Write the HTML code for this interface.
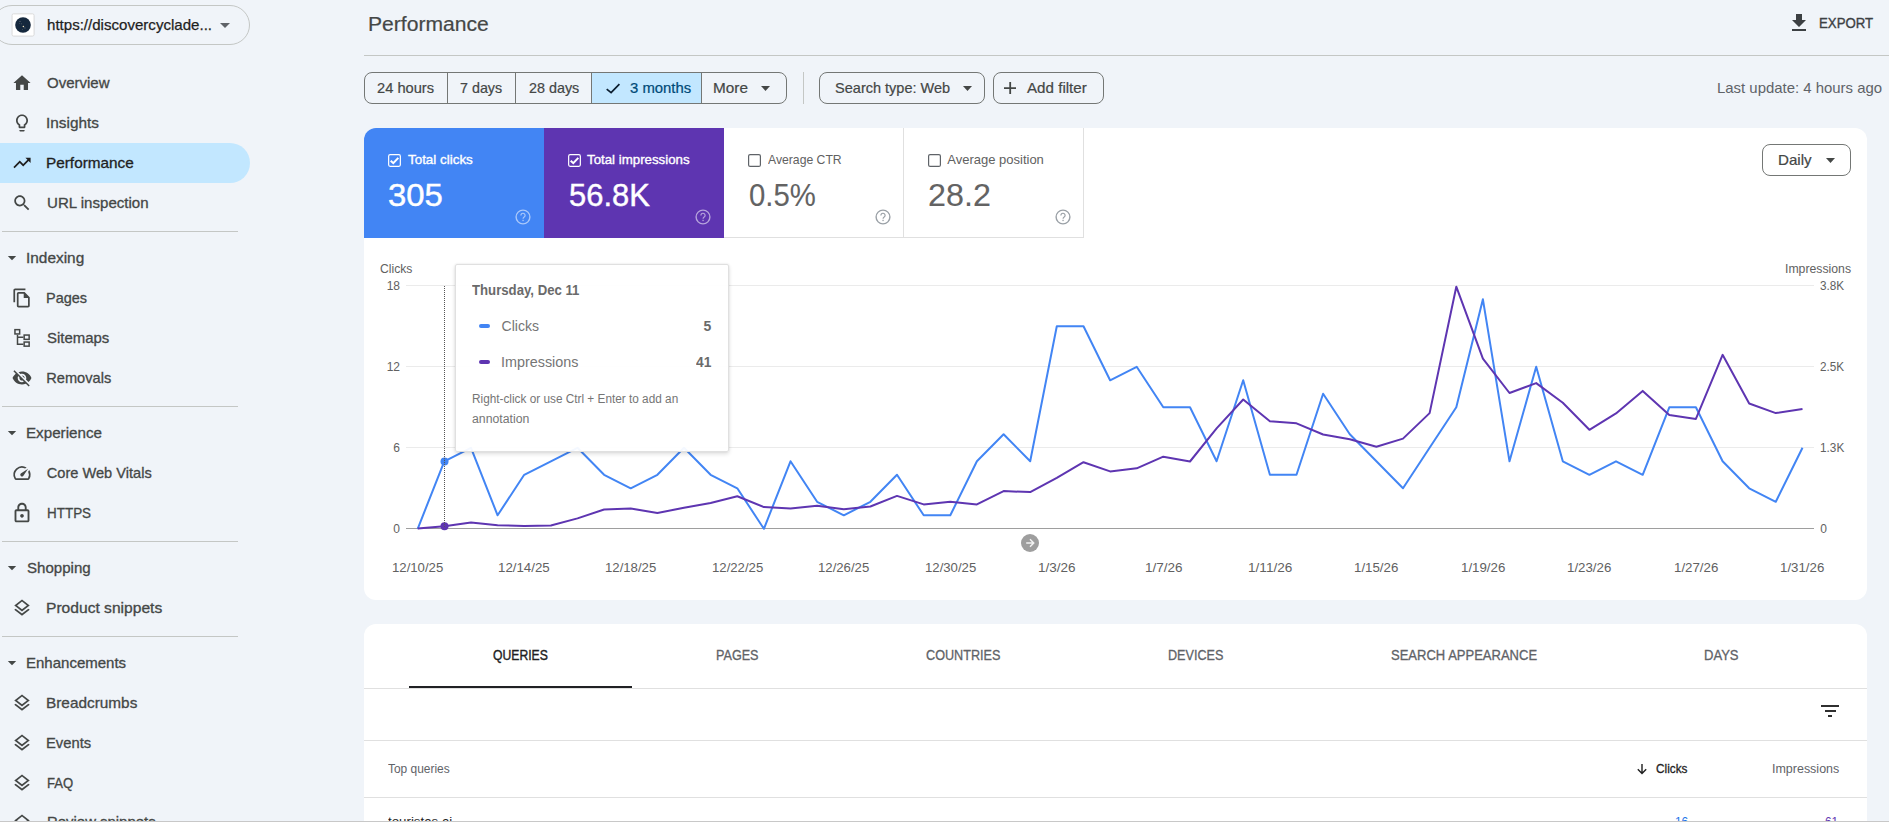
<!DOCTYPE html>
<html lang="en"><head><meta charset="utf-8"><title>Performance</title>
<style>
html,body{margin:0;padding:0}
body{width:1889px;height:822px;overflow:hidden;position:relative;background:#f0f4f9;font-family:"Liberation Sans",sans-serif}
.b{position:absolute;display:block}
.t{position:absolute;white-space:pre;display:block;transform-origin:0 0}
</style></head><body>
<div class="b" style="left:-8px;top:5px;width:258px;height:39.5px;border:1px solid #c4c7c5;border-radius:21px;box-sizing:border-box;"></div>
<svg class="b" style="left:11px;top:13px" width="24" height="24" viewBox="0 0 24 24"><rect x="1.050" y=".85" width="22" height="22.200" rx="1.500" fill="#fff" stroke="#d6d6d6" stroke-width=".9"/><circle cx="12" cy="12" r="7.800" fill="#15283d"/><circle cx="12.400" cy="13.600" r=".75" fill="#f5e6c0"/><g fill="#5b6470"><circle cx="9" cy="8.400" r=".6"/><circle cx="10.300" cy="10.800" r=".5"/><circle cx="13.900" cy="14.900" r=".6"/><circle cx="11.500" cy="16.500" r=".45"/><circle cx="8.600" cy="10.500" r=".4"/></g></svg>
<span class="t " style="left:46.76px;top:17.17px;font-size:15px;line-height:15px;color:#1f1f1f;transform:scaleX(1.0047);-webkit-text-stroke:0.25px #1f1f1f;">https://discovercyclade...</span>
<svg class="b" style="left:219px;top:22px" width="12" height="7" viewBox="0 0 12 7"><path d="M1 1h10L6 6z" fill="#5f6368"/></svg>
<svg class="b" style="left:10px;top:71px" width="24" height="24" viewBox="0 0 24 24" fill="#444746" color="#444746"><path transform="translate(1.68 1.68) scale(.86)" d="M10 20v-6h4v6h5v-8h3L12 3 2 12h3v8z"/></svg>
<span class="t " style="left:46.68px;top:75.77px;font-size:14.6px;line-height:14.6px;color:#444746;transform:scaleX(1.0285);-webkit-text-stroke:0.3px #444746;">Overview</span>
<svg class="b" style="left:10px;top:111px" width="24" height="24" viewBox="0 0 24 24" fill="#444746" color="#444746"><path transform="translate(1.68 1.68) scale(.86)" d="M9 21c0 .55.45 1 1 1h4c.55 0 1-.45 1-1v-1H9v1zm3-19C8.14 2 5 5.14 5 9c0 2.38 1.19 4.47 3 5.74V17c0 .55.45 1 1 1h6c.55 0 1-.45 1-1v-2.26c1.81-1.27 3-3.36 3-5.74 0-3.86-3.14-7-7-7zm2.85 11.1l-.85.6V16h-4v-2.3l-.85-.6C7.8 12.16 7 10.63 7 9c0-2.76 2.24-5 5-5s5 2.24 5 5c0 1.63-.8 3.16-2.15 4.1z"/></svg>
<span class="t " style="left:45.75px;top:115.77px;font-size:14.6px;line-height:14.6px;color:#444746;transform:scaleX(1.0516);-webkit-text-stroke:0.3px #444746;">Insights</span>
<div class="b" style="left:0px;top:143px;width:250px;height:40px;background:#c2e7ff;border-radius:0 20px 20px 0;"></div>
<svg class="b" style="left:10px;top:151px" width="24" height="24" viewBox="0 0 24 24" fill="#1f1f1f" color="#1f1f1f"><path transform="translate(1.68 1.68) scale(.86)" d="M16 6l2.29 2.29-4.88 4.88-4-4L2 16.59 3.41 18l6-6 4 4 6.3-6.29L22 12V6z"/></svg>
<span class="t " style="left:45.70px;top:155.77px;font-size:14.6px;line-height:14.6px;color:#1f1f1f;transform:scaleX(1.0510);-webkit-text-stroke:0.3px #1f1f1f;">Performance</span>
<svg class="b" style="left:10px;top:191px" width="24" height="24" viewBox="0 0 24 24" fill="#444746" color="#444746"><path transform="translate(1.68 1.68) scale(.86)" d="M15.5 14h-.79l-.28-.27C15.41 12.59 16 11.11 16 9.5 16 5.91 13.09 3 9.5 3S3 5.91 3 9.5 5.91 16 9.5 16c1.61 0 3.09-.59 4.23-1.57l.27.28v.79l5 4.99L20.49 19l-4.99-5zm-6 0C7.01 14 5 11.99 5 9.5S7.01 5 9.5 5 14 7.01 14 9.5 11.99 14 9.5 14z"/></svg>
<span class="t " style="left:46.50px;top:195.77px;font-size:14.6px;line-height:14.6px;color:#444746;transform:scaleX(1.0323);-webkit-text-stroke:0.3px #444746;">URL inspection</span>
<div class="b" style="left:2px;top:231.0px;width:236px;height:1px;background:#c4c7c5;"></div>
<svg class="b" style="left:7px;top:255px" width="10" height="6" viewBox="0 0 10 6"><path d="M.8 1h8.400L5 5.200z" fill="#444746"/></svg>
<span class="t " style="left:25.55px;top:250.67px;font-size:14.6px;line-height:14.6px;color:#444746;transform:scaleX(1.0557);-webkit-text-stroke:0.3px #444746;">Indexing</span>
<svg class="b" style="left:10px;top:286px" width="24" height="24" viewBox="0 0 24 24" fill="#444746" color="#444746"><path transform="translate(1.68 1.68) scale(.86)" d="M16 1H4c-1.1 0-2 .9-2 2v14h2V3h12V1zm-1 4H8c-1.1 0-1.99.9-1.99 2L6 21c0 1.1.89 2 1.99 2H19c1.1 0 2-.9 2-2V11l-6-6zM8 21V7h6v5h5v9H8z"/></svg>
<span class="t " style="left:45.80px;top:290.77px;font-size:14.6px;line-height:14.6px;color:#444746;transform:scaleX(0.9926);-webkit-text-stroke:0.3px #444746;">Pages</span>
<svg class="b" style="left:10px;top:326px" width="24" height="24" viewBox="0 0 24 24" fill="#444746" color="#444746"><g fill="none" stroke="currentColor" stroke-width="1.5"><rect x="4.95" y="3.65" width="4.7" height="4.3"/><rect x="14.15" y="9.05" width="5" height="4.3"/><rect x="14.15" y="16.05" width="5" height="4.1"/><path d="M7.500 8.700V18.200H13.400M7.500 11.200H13.400"/></g></svg>
<span class="t " style="left:46.70px;top:330.77px;font-size:14.6px;line-height:14.6px;color:#444746;transform:scaleX(1.0248);-webkit-text-stroke:0.3px #444746;">Sitemaps</span>
<svg class="b" style="left:10px;top:366px" width="24" height="24" viewBox="0 0 24 24" fill="#444746" color="#444746"><path transform="translate(1.68 1.68) scale(.86)" d="M12 7c2.76 0 5 2.24 5 5 0 .65-.13 1.26-.36 1.83l2.92 2.92c1.51-1.26 2.7-2.89 3.43-4.75-1.73-4.39-6-7.5-11-7.5-1.4 0-2.74.25-3.98.7l2.16 2.16C10.74 7.13 11.35 7 12 7zM2 4.27l2.28 2.28.46.46C3.08 8.3 1.78 10.02 1 12c1.73 4.39 6 7.5 11 7.5 1.55 0 3.03-.3 4.38-.84l.42.42L19.73 22 21 20.73 3.27 3 2 4.27zM7.53 9.8l1.55 1.55c-.05.21-.08.43-.08.65 0 1.66 1.34 3 3 3 .22 0 .44-.03.65-.08l1.55 1.55c-.67.33-1.41.53-2.2.53-2.76 0-5-2.24-5-5 0-.79.2-1.53.53-2.2zm4.31-.78l3.15 3.15.02-.16c0-1.66-1.34-3-3-3l-.17.01z"/></svg>
<span class="t " style="left:46.32px;top:370.77px;font-size:14.6px;line-height:14.6px;color:#444746;-webkit-text-stroke:0.3px #444746;">Removals</span>
<div class="b" style="left:2px;top:406.0px;width:236px;height:1px;background:#c4c7c5;"></div>
<svg class="b" style="left:7px;top:430px" width="10" height="6" viewBox="0 0 10 6"><path d="M.8 1h8.400L5 5.200z" fill="#444746"/></svg>
<span class="t " style="left:25.80px;top:425.67px;font-size:14.6px;line-height:14.6px;color:#444746;transform:scaleX(1.0396);-webkit-text-stroke:0.3px #444746;">Experience</span>
<svg class="b" style="left:10px;top:461px" width="24" height="24" viewBox="0 0 24 24" fill="#444746" color="#444746"><path transform="translate(1.68 1.68) scale(.86)" d="M20.38 8.57l-1.23 1.85a8 8 0 0 1-.22 7.58H5.07A8 8 0 0 1 15.58 6.85l1.85-1.23A10 10 0 0 0 3.35 19a2 2 0 0 0 1.72 1h13.85a2 2 0 0 0 1.74-1 10 10 0 0 0-.27-10.44zm-9.79 6.84a2 2 0 0 0 2.83 0l5.66-8.49-8.49 5.66a2 2 0 0 0 0 2.83z"/></svg>
<span class="t " style="left:46.81px;top:465.77px;font-size:14.6px;line-height:14.6px;color:#444746;-webkit-text-stroke:0.3px #444746;">Core Web Vitals</span>
<svg class="b" style="left:10px;top:501px" width="24" height="24" viewBox="0 0 24 24" fill="#444746" color="#444746"><path transform="translate(0.84 0.84) scale(.93)" d="M18 8h-1V6c0-2.76-2.24-5-5-5S7 3.240 7 6v2H6c-1.100 0-2 .9-2 2v10c0 1.100.9 2 2 2h12c1.100 0 2-.9 2-2V10c0-1.100-.9-2-2-2zM9 6c0-1.660 1.340-3 3-3s3 1.340 3 3v2H9V6zm9 14H6V10h12v10zm-6-3c1.100 0 2-.9 2-2s-.9-2-2-2-2 .9-2 2 .9 2 2 2z"/></svg>
<span class="t " style="left:46.81px;top:505.77px;font-size:14.6px;line-height:14.6px;color:#444746;transform:scaleX(0.9211);-webkit-text-stroke:0.3px #444746;">HTTPS</span>
<div class="b" style="left:2px;top:541.0px;width:236px;height:1px;background:#c4c7c5;"></div>
<svg class="b" style="left:7px;top:565px" width="10" height="6" viewBox="0 0 10 6"><path d="M.8 1h8.400L5 5.200z" fill="#444746"/></svg>
<span class="t " style="left:26.51px;top:560.67px;font-size:14.6px;line-height:14.6px;color:#444746;transform:scaleX(1.0330);-webkit-text-stroke:0.3px #444746;">Shopping</span>
<svg class="b" style="left:10px;top:596px" width="24" height="24" viewBox="0 0 24 24" fill="#444746" color="#444746"><path transform="translate(1.68 1.68) scale(.86)" d="M11.99 18.54l-7.37-5.73L3 14.07l9 7 9-7-1.630-1.270-7.380 5.740zM12 16l7.360-5.730L21 9l-9-7-9 7 1.630 1.270L12 16zm0-11.470L17.740 9 12 13.470 6.260 9 12 4.530z"/></svg>
<span class="t " style="left:45.91px;top:600.77px;font-size:14.6px;line-height:14.6px;color:#444746;transform:scaleX(1.0690);-webkit-text-stroke:0.3px #444746;">Product snippets</span>
<div class="b" style="left:2px;top:636.0px;width:236px;height:1px;background:#c4c7c5;"></div>
<svg class="b" style="left:7px;top:660px" width="10" height="6" viewBox="0 0 10 6"><path d="M.8 1h8.400L5 5.200z" fill="#444746"/></svg>
<span class="t " style="left:25.90px;top:655.67px;font-size:14.6px;line-height:14.6px;color:#444746;transform:scaleX(1.0282);-webkit-text-stroke:0.3px #444746;">Enhancements</span>
<svg class="b" style="left:10px;top:691px" width="24" height="24" viewBox="0 0 24 24" fill="#444746" color="#444746"><path transform="translate(1.68 1.68) scale(.86)" d="M11.99 18.54l-7.37-5.73L3 14.07l9 7 9-7-1.630-1.270-7.380 5.740zM12 16l7.360-5.730L21 9l-9-7-9 7 1.630 1.270L12 16zm0-11.470L17.740 9 12 13.470 6.260 9 12 4.530z"/></svg>
<span class="t " style="left:45.98px;top:695.77px;font-size:14.6px;line-height:14.6px;color:#444746;transform:scaleX(1.0522);-webkit-text-stroke:0.3px #444746;">Breadcrumbs</span>
<svg class="b" style="left:10px;top:731px" width="24" height="24" viewBox="0 0 24 24" fill="#444746" color="#444746"><path transform="translate(1.68 1.68) scale(.86)" d="M11.99 18.54l-7.37-5.73L3 14.07l9 7 9-7-1.630-1.270-7.380 5.740zM12 16l7.360-5.730L21 9l-9-7-9 7 1.630 1.270L12 16zm0-11.470L17.740 9 12 13.470 6.260 9 12 4.530z"/></svg>
<span class="t " style="left:45.85px;top:735.77px;font-size:14.6px;line-height:14.6px;color:#444746;transform:scaleX(1.0109);-webkit-text-stroke:0.3px #444746;">Events</span>
<svg class="b" style="left:10px;top:771px" width="24" height="24" viewBox="0 0 24 24" fill="#444746" color="#444746"><path transform="translate(1.68 1.68) scale(.86)" d="M11.99 18.54l-7.37-5.73L3 14.07l9 7 9-7-1.630-1.270-7.380 5.740zM12 16l7.360-5.730L21 9l-9-7-9 7 1.630 1.270L12 16zm0-11.470L17.740 9 12 13.470 6.260 9 12 4.530z"/></svg>
<span class="t " style="left:46.58px;top:775.77px;font-size:14.6px;line-height:14.6px;color:#444746;transform:scaleX(0.8961);-webkit-text-stroke:0.3px #444746;">FAQ</span>
<svg class="b" style="left:10px;top:811px" width="24" height="24" viewBox="0 0 24 24" fill="#444746" color="#444746"><path transform="translate(1.68 1.68) scale(.86)" d="M11.99 18.54l-7.37-5.73L3 14.07l9 7 9-7-1.630-1.270-7.380 5.740zM12 16l7.360-5.730L21 9l-9-7-9 7 1.630 1.270L12 16zm0-11.470L17.740 9 12 13.470 6.260 9 12 4.530z"/></svg>
<span class="t " style="left:46.90px;top:814.77px;font-size:14.6px;line-height:14.6px;color:#444746;transform:scaleX(1.0220);-webkit-text-stroke:0.3px #444746;">Review snippets</span>
<span class="t " style="left:367.66px;top:13.59px;font-size:20.5px;line-height:20.5px;color:#444746;transform:scaleX(1.0290);-webkit-text-stroke:0.2px #444746;">Performance</span>
<div class="b" style="left:364px;top:54.5px;width:1525px;height:1px;background:#c4c7c5;"></div>
<svg class="b" style="left:1787px;top:10.5px" width="24" height="24" viewBox="0 0 24 24" fill="#3c4043"><path d="M19 9h-4V3H9v6H5l7 7 7-7zM5 18v2h14v-2H5z"/></svg>
<span class="t " style="left:1818.98px;top:15.76px;font-size:14px;line-height:14px;color:#3c4043;transform:scaleX(0.9451);-webkit-text-stroke:0.35px #3c4043;">EXPORT</span>
<div class="b" style="left:364px;top:72px;width:423px;height:32px;border:1px solid #747775;border-radius:8px;box-sizing:border-box;overflow:hidden;"><div class="b" style="left:227px;top:0;width:110px;height:30px;background:#c2e7ff"></div><div class="b" style="left:82px;top:0;width:1px;height:30px;background:#747775"></div><div class="b" style="left:150px;top:0;width:1px;height:30px;background:#747775"></div><div class="b" style="left:226px;top:0;width:1px;height:30px;background:#747775"></div><div class="b" style="left:336px;top:0;width:1px;height:30px;background:#747775"></div></div>
<span class="t " style="left:376.59px;top:80.52px;font-size:14.5px;line-height:14.5px;color:#444746;transform:scaleX(1.0117);-webkit-text-stroke:0.2px #444746;">24 hours</span>
<span class="t " style="left:459.60px;top:80.52px;font-size:14.5px;line-height:14.5px;color:#444746;transform:scaleX(0.9864);-webkit-text-stroke:0.2px #444746;">7 days</span>
<span class="t " style="left:528.66px;top:80.52px;font-size:14.5px;line-height:14.5px;color:#444746;transform:scaleX(0.9896);-webkit-text-stroke:0.2px #444746;">28 days</span>
<svg class="b" style="left:605px;top:82px" width="16" height="13" viewBox="0 0 16 13"><path d="M1.700 7.100l4.400 3.600L14.400 2.100" fill="none" stroke="#0b1d2e" stroke-width="1.700"/></svg>
<span class="t " style="left:629.70px;top:80.52px;font-size:14.5px;line-height:14.5px;color:#004a77;transform:scaleX(1.0251);-webkit-text-stroke:0.2px #004a77;">3 months</span>
<span class="t " style="left:713.28px;top:80.52px;font-size:14.5px;line-height:14.5px;color:#444746;transform:scaleX(1.0571);-webkit-text-stroke:0.2px #444746;">More</span>
<svg class="b" style="left:760.5px;top:86px" width="9" height="5" viewBox="0 0 9 5"><path d="M0 0h9L4.5 5z" fill="#444746"/></svg>
<div class="b" style="left:802.5px;top:72px;width:1px;height:32px;background:#c4c7c5;"></div>
<div class="b" style="left:819px;top:72px;width:166px;height:32px;border:1px solid #747775;border-radius:8px;box-sizing:border-box;"></div>
<span class="t " style="left:835.10px;top:80.52px;font-size:14.5px;line-height:14.5px;color:#444746;-webkit-text-stroke:0.2px #444746;">Search type: Web</span>
<svg class="b" style="left:963px;top:86px" width="9" height="5" viewBox="0 0 9 5"><path d="M0 0h9L4.5 5z" fill="#444746"/></svg>
<div class="b" style="left:993px;top:72px;width:110.5px;height:32px;border:1px solid #747775;border-radius:8px;box-sizing:border-box;"></div>
<svg class="b" style="left:1003.8px;top:81.800px" width="12.400" height="12.400" viewBox="0 0 12.400 12.400"><path d="M6.200 0v12.400M0 6.200h12.400" stroke="#444746" stroke-width="1.800"/></svg>
<span class="t " style="left:1026.56px;top:80.52px;font-size:14.5px;line-height:14.5px;color:#444746;transform:scaleX(1.0451);-webkit-text-stroke:0.2px #444746;">Add filter</span>
<span class="t " style="left:1717.25px;top:80.07px;font-size:15px;line-height:15px;color:#5f6368;transform:scaleX(0.9948);">Last update: 4 hours ago</span>
<div class="b" style="left:364px;top:128px;width:1503px;height:472px;background:#fff;border-radius:12px;"></div>
<div class="b" style="left:364px;top:128px;width:180px;height:110px;background:#4285f4;border-radius:12px 0 0 0;"></div>
<div class="b" style="left:544px;top:128px;width:180px;height:110px;background:#5e35b1;"></div>
<div class="b" style="left:724px;top:237px;width:360px;height:1px;background:#e0e0e0;"></div>
<div class="b" style="left:903px;top:128px;width:1px;height:110px;background:#e0e0e0;"></div>
<div class="b" style="left:1083px;top:128px;width:1px;height:110px;background:#e0e0e0;"></div>
<svg class="b" style="left:388px;top:154px" width="13" height="13" viewBox="0 0 13 13"><rect x=".65" y=".65" width="11.700" height="11.700" rx="1.500" fill="none" stroke="#fff" stroke-width="1.200"/><path d="M2.700 6.700l2.600 2.500 5-5.300" fill="none" stroke="#fff" stroke-width="2"/></svg>
<span class="t " style="left:407.78px;top:152.85px;font-size:13px;line-height:13px;color:#fff;transform:scaleX(1.0307);-webkit-text-stroke:0.35px #fff;">Total clicks</span>
<span class="t " style="left:388.10px;top:178.97px;font-size:32px;line-height:32px;color:#fff;transform:scaleX(1.0270);-webkit-text-stroke:0.45px #fff;">305</span>
<svg class="b" style="left:515px;top:209.3px" width="16" height="16" viewBox="0 0 16 16"><circle cx="8" cy="8" r="6.900" fill="none" stroke="rgba(255,255,255,.55)" stroke-width="1.400"/><path d="M5.900 6.400a2.100 2.100 0 1 1 3.300 1.700c-.7.500-1.100.9-1.100 1.700" fill="none" stroke="rgba(255,255,255,.55)" stroke-width="1.200"/><rect x="7.400" y="10.800" width="1.300" height="1.300" fill="rgba(255,255,255,.55)"/></svg>
<svg class="b" style="left:568px;top:154px" width="13" height="13" viewBox="0 0 13 13"><rect x=".65" y=".65" width="11.700" height="11.700" rx="1.500" fill="none" stroke="#fff" stroke-width="1.200"/><path d="M2.700 6.700l2.600 2.500 5-5.300" fill="none" stroke="#fff" stroke-width="2"/></svg>
<span class="t " style="left:587.30px;top:152.85px;font-size:13px;line-height:13px;color:#fff;transform:scaleX(1.0217);-webkit-text-stroke:0.35px #fff;">Total impressions</span>
<span class="t " style="left:568.70px;top:178.97px;font-size:32px;line-height:32px;color:#fff;transform:scaleX(0.9662);-webkit-text-stroke:0.45px #fff;">56.8K</span>
<svg class="b" style="left:695px;top:209.3px" width="16" height="16" viewBox="0 0 16 16"><circle cx="8" cy="8" r="6.900" fill="none" stroke="rgba(255,255,255,.55)" stroke-width="1.400"/><path d="M5.900 6.400a2.100 2.100 0 1 1 3.300 1.700c-.7.500-1.100.9-1.100 1.700" fill="none" stroke="rgba(255,255,255,.55)" stroke-width="1.200"/><rect x="7.400" y="10.800" width="1.300" height="1.300" fill="rgba(255,255,255,.55)"/></svg>
<svg class="b" style="left:748px;top:154px" width="13" height="13" viewBox="0 0 13 13"><rect x=".6" y=".6" width="11.8" height="11.8" rx="1.5" fill="#fff" stroke="#5f6368" stroke-width="1.2"/></svg>
<span class="t " style="left:767.97px;top:152.85px;font-size:13px;line-height:13px;color:#616161;transform:scaleX(0.9380);">Average CTR</span>
<span class="t " style="left:748.85px;top:178.97px;font-size:32px;line-height:32px;color:#636363;transform:scaleX(0.9160);-webkit-text-stroke:0.1px #636363;">0.5%</span>
<svg class="b" style="left:875px;top:209.3px" width="16" height="16" viewBox="0 0 16 16"><circle cx="8" cy="8" r="6.900" fill="none" stroke="#9aa0a6" stroke-width="1.400"/><path d="M5.900 6.400a2.100 2.100 0 1 1 3.300 1.700c-.7.500-1.100.9-1.100 1.700" fill="none" stroke="#9aa0a6" stroke-width="1.200"/><rect x="7.400" y="10.800" width="1.300" height="1.300" fill="#9aa0a6"/></svg>
<svg class="b" style="left:928px;top:154px" width="13" height="13" viewBox="0 0 13 13"><rect x=".6" y=".6" width="11.8" height="11.8" rx="1.5" fill="#fff" stroke="#5f6368" stroke-width="1.2"/></svg>
<span class="t " style="left:947.24px;top:152.85px;font-size:13px;line-height:13px;color:#616161;">Average position</span>
<span class="t " style="left:928.19px;top:178.97px;font-size:32px;line-height:32px;color:#636363;transform:scaleX(1.0090);-webkit-text-stroke:0.1px #636363;">28.2</span>
<svg class="b" style="left:1055px;top:209.3px" width="16" height="16" viewBox="0 0 16 16"><circle cx="8" cy="8" r="6.900" fill="none" stroke="#9aa0a6" stroke-width="1.400"/><path d="M5.900 6.400a2.100 2.100 0 1 1 3.300 1.700c-.7.500-1.100.9-1.100 1.700" fill="none" stroke="#9aa0a6" stroke-width="1.200"/><rect x="7.400" y="10.800" width="1.300" height="1.300" fill="#9aa0a6"/></svg>
<div class="b" style="left:1762px;top:144px;width:89px;height:32px;border:1px solid #747775;border-radius:8px;box-sizing:border-box;"></div>
<span class="t " style="left:1777.92px;top:153.42px;font-size:14.5px;line-height:14.5px;color:#444746;transform:scaleX(1.0430);-webkit-text-stroke:0.2px #444746;">Daily</span>
<svg class="b" style="left:1826px;top:158px" width="9" height="5" viewBox="0 0 9 5"><path d="M0 0h9L4.500 5z" fill="#444746"/></svg>
<svg class="b" style="left:0;top:0" width="1889" height="822" viewBox="0 0 1889 822"><line x1="406" x2="1814" y1="285.5" y2="285.5" stroke="#ebebeb" stroke-width="1"/><line x1="406" x2="1814" y1="366.5" y2="366.5" stroke="#ebebeb" stroke-width="1"/><line x1="406" x2="1814" y1="447.5" y2="447.5" stroke="#ebebeb" stroke-width="1"/><line x1="406" x2="1814" y1="528.5" y2="528.5" stroke="#9e9e9e" stroke-width="1"/><polyline points="417.7,528.8 444.3,461.3 471.0,447.8 497.6,515.3 524.2,474.8 550.9,461.3 577.5,447.8 604.1,474.8 630.7,488.3 657.4,474.8 684.0,447.8 710.6,474.8 737.3,488.3 763.9,528.8 790.5,461.3 817.1,501.8 843.8,515.3 870.4,501.8 897.0,474.8 923.7,515.3 950.3,515.3 976.9,461.3 1003.6,434.3 1030.2,461.3 1056.8,326.3 1083.5,326.3 1110.1,380.3 1136.7,366.8 1163.3,407.3 1190.0,407.3 1216.6,461.3 1243.2,380.3 1269.9,474.8 1296.5,474.8 1323.1,393.8 1349.8,434.3 1376.4,461.3 1403.0,488.3 1429.6,447.8 1456.3,407.3 1482.9,299.3 1509.5,461.3 1536.2,366.8 1562.8,461.3 1589.4,474.8 1616.0,461.3 1642.7,474.8 1669.3,407.3 1695.9,407.3 1722.6,461.3 1749.2,488.3 1775.8,501.8 1802.5,447.8" fill="none" stroke="#4285f4" stroke-width="2" stroke-linejoin="round"/><polyline points="417.7,528.4 444.3,526.2 471.0,522.5 497.6,525.2 524.2,525.9 550.9,525.5 577.5,518.4 604.1,509.5 630.7,508.5 657.4,512.9 684.0,507.8 710.6,503.0 737.3,496.2 763.9,507.1 790.5,508.5 817.1,505.8 843.8,509.2 870.4,506.5 897.0,495.9 923.7,504.4 950.3,501.7 976.9,504.4 1003.6,491.1 1030.2,492.1 1056.8,477.8 1083.5,462.2 1110.1,471.4 1136.7,468.3 1163.3,456.7 1190.0,461.5 1216.6,428.4 1243.2,399.5 1269.9,421.3 1296.5,423.3 1323.1,434.5 1349.8,439.3 1376.4,446.8 1403.0,438.6 1429.6,413.1 1456.3,286.7 1482.9,358.6 1509.5,393.0 1536.2,383.1 1562.8,402.8 1589.4,429.8 1616.0,413.4 1642.7,390.9 1669.3,415.1 1695.9,418.9 1722.6,354.8 1749.2,403.5 1775.8,413.1 1802.5,409.0" fill="none" stroke="#5e35b1" stroke-width="2" stroke-linejoin="round"/><circle cx="444.5" cy="461.5" r="4" fill="#4285f4"/><circle cx="444.5" cy="526.3" r="4" fill="#5e35b1"/><line x1="444.5" x2="444.5" y1="286" y2="528" stroke="#555" stroke-width="1" stroke-dasharray="1 1"/><circle cx="1030" cy="543" r="9" fill="#9e9e9e"/><path d="M1026.200 543h7M1030 539.300l3.700 3.700-3.700 3.700" fill="none" stroke="#f2f2f2" stroke-width="1.500"/></svg>
<span class="t " style="left:380.20px;top:263.34px;font-size:12px;line-height:12px;color:#616161;transform:scaleX(1.0125);">Clicks</span>
<span class="t " style="left:1784.70px;top:263.34px;font-size:12px;line-height:12px;color:#616161;transform:scaleX(1.0205);">Impressions</span>
<span class="t " style="left:386.66px;top:280.14px;font-size:12px;line-height:12px;color:#616161;">18</span>
<span class="t " style="left:386.66px;top:361.14px;font-size:12px;line-height:12px;color:#616161;">12</span>
<span class="t " style="left:393.33px;top:442.14px;font-size:12px;line-height:12px;color:#616161;">6</span>
<span class="t " style="left:393.33px;top:523.14px;font-size:12px;line-height:12px;color:#616161;">0</span>
<span class="t " style="left:1819.50px;top:280.14px;font-size:12px;line-height:12px;color:#616161;transform:scaleX(0.9785);">3.8K</span>
<span class="t " style="left:1819.50px;top:361.14px;font-size:12px;line-height:12px;color:#616161;transform:scaleX(0.9761);">2.5K</span>
<span class="t " style="left:1819.92px;top:442.14px;font-size:12px;line-height:12px;color:#616161;transform:scaleX(0.9847);">1.3K</span>
<span class="t " style="left:1820.28px;top:523.14px;font-size:12px;line-height:12px;color:#616161;">0</span>
<span class="t " style="left:392.35px;top:562.34px;font-size:12px;line-height:12px;color:#616161;transform:scaleX(1.0966);">12/10/25</span>
<span class="t " style="left:498.28px;top:562.34px;font-size:12px;line-height:12px;color:#616161;transform:scaleX(1.1073);">12/14/25</span>
<span class="t " style="left:604.73px;top:562.34px;font-size:12px;line-height:12px;color:#616161;transform:scaleX(1.0966);">12/18/25</span>
<span class="t " style="left:711.69px;top:562.34px;font-size:12px;line-height:12px;color:#616161;transform:scaleX(1.0966);">12/22/25</span>
<span class="t " style="left:817.81px;top:562.34px;font-size:12px;line-height:12px;color:#616161;transform:scaleX(1.0966);">12/26/25</span>
<span class="t " style="left:924.85px;top:562.34px;font-size:12px;line-height:12px;color:#616161;transform:scaleX(1.0966);">12/30/25</span>
<span class="t " style="left:1037.66px;top:562.34px;font-size:12px;line-height:12px;color:#616161;transform:scaleX(1.1264);">1/3/26</span>
<span class="t " style="left:1144.88px;top:562.34px;font-size:12px;line-height:12px;color:#616161;transform:scaleX(1.1264);">1/7/26</span>
<span class="t " style="left:1247.53px;top:562.34px;font-size:12px;line-height:12px;color:#616161;transform:scaleX(1.1333);">1/11/26</span>
<span class="t " style="left:1354.46px;top:562.34px;font-size:12px;line-height:12px;color:#616161;transform:scaleX(1.1063);">1/15/26</span>
<span class="t " style="left:1461.25px;top:562.34px;font-size:12px;line-height:12px;color:#616161;transform:scaleX(1.1063);">1/19/26</span>
<span class="t " style="left:1567.06px;top:562.34px;font-size:12px;line-height:12px;color:#616161;transform:scaleX(1.1063);">1/23/26</span>
<span class="t " style="left:1674.33px;top:562.34px;font-size:12px;line-height:12px;color:#616161;transform:scaleX(1.1063);">1/27/26</span>
<span class="t " style="left:1780.00px;top:562.34px;font-size:12px;line-height:12px;color:#616161;transform:scaleX(1.1063);">1/31/26</span>
<div class="b" style="left:455px;top:264px;width:273.5px;height:188px;background:rgba(255,255,255,.94);border:1px solid #e0e0e0;box-sizing:border-box;border-radius:2px;box-shadow:0 2px 4px rgba(0,0,0,.13),0 0 2px rgba(0,0,0,.1);"></div>
<span class="t " style="left:471.70px;top:282.66px;font-size:14px;line-height:14px;color:#6a6a6a;font-weight:700;transform:scaleX(0.9411);">Thursday, Dec 11</span>
<div class="b" style="left:479px;top:323.5px;width:11px;height:4px;background:#4285f4;border-radius:2px;"></div>
<span class="t " style="left:501.58px;top:319.46px;font-size:14px;line-height:14px;color:#757575;">Clicks</span>
<span class="t " style="left:703.52px;top:319.46px;font-size:14px;line-height:14px;color:#6a6a6a;font-weight:700;">5</span>
<div class="b" style="left:479px;top:359.5px;width:11px;height:4px;background:#5e35b1;border-radius:2px;"></div>
<span class="t " style="left:501.10px;top:355.46px;font-size:14px;line-height:14px;color:#757575;transform:scaleX(1.0258);">Impressions</span>
<span class="t " style="left:695.80px;top:355.46px;font-size:14px;line-height:14px;color:#6a6a6a;font-weight:700;transform:scaleX(0.9821);">41</span>
<span class="t " style="left:471.56px;top:392.64px;font-size:12px;line-height:12px;color:#757575;transform:scaleX(0.9830);">Right-click or use Ctrl + Enter to add an</span>
<span class="t " style="left:471.96px;top:413.44px;font-size:12px;line-height:12px;color:#757575;transform:scaleX(1.0221);">annotation</span>
<div class="b" style="left:364px;top:624px;width:1503px;height:220px;background:#fff;border-radius:12px 12px 0 0;"></div>
<span class="t " style="left:492.95px;top:647.86px;font-size:14px;line-height:14px;color:#1f1f1f;transform:scaleX(0.8700);-webkit-text-stroke:0.4px #1f1f1f;">QUERIES</span>
<span class="t " style="left:715.70px;top:647.86px;font-size:14px;line-height:14px;color:#5f6368;transform:scaleX(0.9009);-webkit-text-stroke:0.3px #5f6368;">PAGES</span>
<span class="t " style="left:925.74px;top:647.86px;font-size:14px;line-height:14px;color:#5f6368;transform:scaleX(0.9033);-webkit-text-stroke:0.3px #5f6368;">COUNTRIES</span>
<span class="t " style="left:1168.20px;top:647.86px;font-size:14px;line-height:14px;color:#5f6368;transform:scaleX(0.9000);-webkit-text-stroke:0.3px #5f6368;">DEVICES</span>
<span class="t " style="left:1391.10px;top:647.86px;font-size:14px;line-height:14px;color:#5f6368;transform:scaleX(0.9296);-webkit-text-stroke:0.3px #5f6368;">SEARCH APPEARANCE</span>
<span class="t " style="left:1703.77px;top:647.86px;font-size:14px;line-height:14px;color:#5f6368;transform:scaleX(0.9316);-webkit-text-stroke:0.3px #5f6368;">DAYS</span>
<div class="b" style="left:409px;top:685.5px;width:223px;height:2.5px;background:#202124;"></div>
<div class="b" style="left:364px;top:688px;width:1503px;height:1px;background:#e0e0e0;"></div>
<div class="b" style="left:1821px;top:705px;width:18px;height:1.6px;background:#303030;"></div>
<div class="b" style="left:1824.5px;top:710px;width:11px;height:1.6px;background:#303030;"></div>
<div class="b" style="left:1828px;top:715px;width:4px;height:1.6px;background:#303030;"></div>
<div class="b" style="left:364px;top:740px;width:1503px;height:1px;background:#e0e0e0;"></div>
<span class="t " style="left:388.20px;top:763.24px;font-size:12px;line-height:12px;color:#5f6368;transform:scaleX(0.9947);">Top queries</span>
<svg class="b" style="left:1636px;top:763px" width="12" height="12" viewBox="0 0 12 12"><path d="M6 1v9.500M1.800 6.300L6 10.500l4.200-4.200" fill="none" stroke="#1f1f1f" stroke-width="1.400"/></svg>
<span class="t " style="left:1656.15px;top:763.24px;font-size:12px;line-height:12px;color:#1f1f1f;transform:scaleX(0.9824);-webkit-text-stroke:0.3px #1f1f1f;">Clicks</span>
<span class="t " style="left:1772.00px;top:763.24px;font-size:12px;line-height:12px;color:#5f6368;transform:scaleX(1.0395);">Impressions</span>
<div class="b" style="left:364px;top:797px;width:1503px;height:1px;background:#e0e0e0;"></div>
<span class="t " style="left:387.80px;top:815.45px;font-size:13px;line-height:13px;color:#1f1f1f;transform:scaleX(1.0229);">touristas ai</span>
<span class="t " style="left:1675.00px;top:815.45px;font-size:13px;line-height:13px;color:#1a73e8;transform:scaleX(0.9133);">16</span>
<span class="t " style="left:1825.00px;top:815.45px;font-size:13px;line-height:13px;color:#5e35b1;transform:scaleX(0.8995);">61</span>
<div class="b" style="left:0px;top:821px;width:1889px;height:1px;background:#c8c8c8;"></div>
</body></html>
